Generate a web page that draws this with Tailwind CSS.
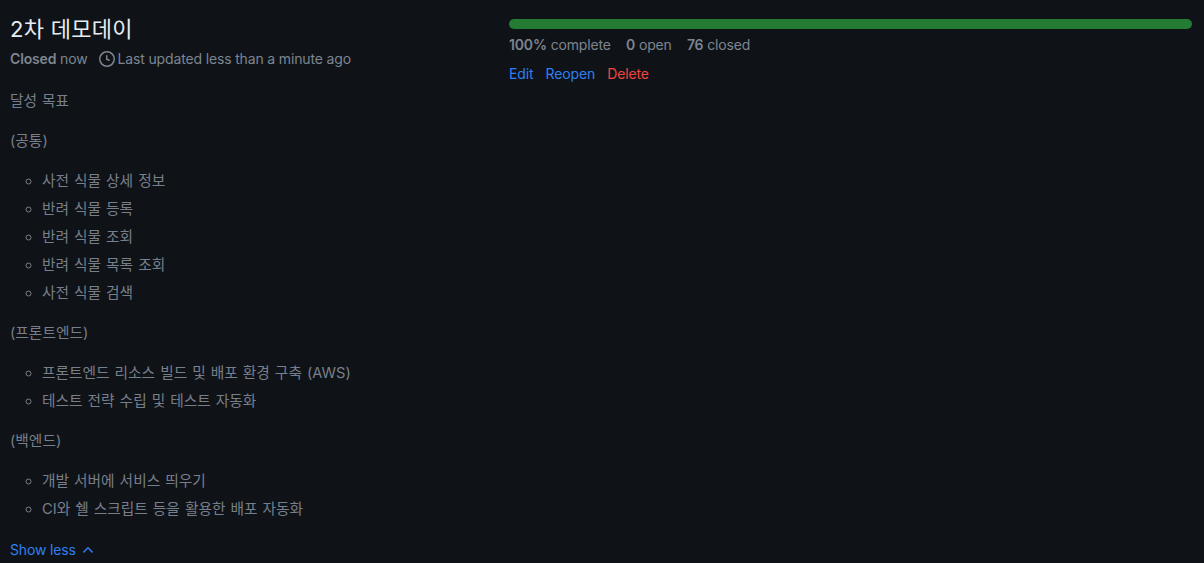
<!DOCTYPE html>
<html lang="ko">
<head>
  <meta charset="UTF-8">
  <meta name="viewport" content="width=device-width, initial-scale=1.0">
  <title>2차 데모데이</title>
  <script src="https://cdn.jsdelivr.net/npm/@tailwindcss/browser@4"></script>
</head>
<body class="bg-[#0f1318] text-[#7d8590] font-['Inter','Noto_Sans_CJK_KR',sans-serif] text-[14px] leading-[21px] h-[563px] overflow-hidden">
  <div class="flex pl-[10px] pr-3 pt-[13px]">
    <!-- Milestone description -->
    <div class="w-[499px] shrink-0">
      <h2 class="text-[22px] leading-[30px] mt-[1px] tracking-[0.3px] text-[#e6edf3]">2차 데모데이</h2>
      <div class="flex items-center mt-[4px] tracking-[-0.15px]">
        <span><strong class="font-semibold">Closed</strong> now</span>
        <svg class="ml-[11px] mr-[3px]" width="16" height="16" viewBox="0 0 16 16" fill="currentColor"><path d="M8 0a8 8 0 1 1 0 16A8 8 0 0 1 8 0ZM1.5 8a6.5 6.5 0 1 0 13 0 6.5 6.5 0 0 0-13 0Zm7-3.25v2.992l2.028.812a.75.75 0 0 1-.557 1.392l-2.5-1A.751.751 0 0 1 7 8.25v-3.5a.75.75 0 0 1 1.5 0Z"/></svg>
        <span>Last updated less than a minute ago</span>
      </div>
      <div class="mt-[22px] text-[14.7px] text-[#787f8a] [word-spacing:0.9px]">
        <p>달성 목표</p>
        <p class="mt-[19px]">(공통)</p>
        <ul class="mt-[19px] pl-[32px] list-[circle] flex flex-col gap-[7px]">
          <li>사전 식물 상세 정보</li>
          <li>반려 식물 등록</li>
          <li>반려 식물 조회</li>
          <li>반려 식물 목록 조회</li>
          <li>사전 식물 검색</li>
        </ul>
        <p class="mt-[19px]">(프론트엔드)</p>
        <ul class="mt-[19px] pl-[32px] list-[circle] flex flex-col gap-[7px]">
          <li>프론트엔드 리소스 빌드 및 배포 환경 구축 (AWS)</li>
          <li>테스트 전략 수립 및 테스트 자동화</li>
        </ul>
        <p class="mt-[19px]">(백엔드)</p>
        <ul class="mt-[19px] pl-[32px] list-[circle] flex flex-col gap-[7px]">
          <li>개발 서버에 서비스 띄우기</li>
          <li>CI와 쉘 스크립트 등을 활용한 배포 자동화</li>
        </ul>
      </div>
      <a href="#" class="flex items-center gap-[4px] mt-[19px] tracking-[-0.15px] text-[#2f7ff0]">
        Show less
        <svg width="16" height="16" viewBox="0 0 16 16" fill="currentColor"><path d="M3.22 10.53a.749.749 0 0 1 0-1.06l4.25-4.25a.749.749 0 0 1 1.06 0l4.25 4.25a.749.749 0 1 1-1.06 1.06L8 6.81 4.28 10.53a.749.749 0 0 1-1.06 0Z"/></svg>
      </a>
    </div>
    <!-- Progress -->
    <div class="flex-1 pt-[6px] tracking-[-0.15px]">
      <div class="h-[10px] rounded-full bg-[#237b34]"></div>
      <div class="flex gap-[15.2px] mt-[5px]">
        <span><strong class="font-semibold">100%</strong> complete</span>
        <span><strong class="font-semibold">0</strong> open</span>
        <span><strong class="font-semibold">76</strong> closed</span>
      </div>
      <div class="flex gap-[12.2px] mt-[8px]">
        <a href="#" class="text-[#2f7ff0]">Edit</a>
        <a href="#" class="text-[#2f7ff0]">Reopen</a>
        <a href="#" class="text-[#f0453f]">Delete</a>
      </div>
    </div>
  </div>
</body>
</html>
